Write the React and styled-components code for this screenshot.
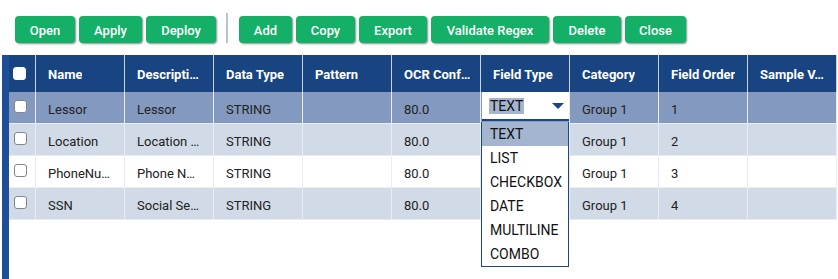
import React from 'react'
import styled, { createGlobalStyle } from 'styled-components'

const GlobalStyle = createGlobalStyle`
  body {
    margin: 0;
    background: #ffffff;
    font-family: Roboto, "Liberation Sans", Arial, sans-serif;
  }
`
const Page = styled.div`
  display: flex;
  flex-direction: column;
  height: 279px;
  overflow: hidden;
`
const Toolbar = styled.div`
  align-items: flex-end;
  display: flex;
  gap: 4px;
  height: 30px;
  padding: 13px 0 0 15px;
`
const Button = styled.button`
  background: #14b068;
  border: none;
  border-radius: 4px;
  box-shadow: 1px 1px 2px rgba(0, 0, 0, 0.45);
  color: #ffffff;
  font-family: Roboto, "Liberation Sans", sans-serif;
  font-size: 13px;
  font-weight: 500;
  height: 27px;
  padding: 1px 0 0;
  width: ${props => props.w}px;
`
const Separator = styled.div`
  align-self: stretch;
  background: #b3c2d8;
  margin: 0 7px 0 6px;
  width: 2px;
`
const Main = styled.div`
  display: flex;
  flex: 1;
  margin-top: 12px;
  padding-left: 2px;
`
const Strip = styled.div`
  background: #1f4e98;
  width: 7px;
`
const Grid = styled.div`
  align-self: flex-start;
  display: grid;
  grid-template-columns: 27px repeat(9, 89px);
`
const HeadCell = styled.div`
  align-items: center;
  background: #184481;
  border-right: 1px solid #c9d1dd;
  box-sizing: border-box;
  color: #ffffff;
  display: flex;
  font-size: 13px;
  font-weight: 700;
  height: 37px;
  overflow: hidden;
  padding: 2px 8px 0 12px;
  &:last-child {
    border-right: none;
  }
`
const Cell = styled.div`
  align-items: center;
  background: ${props => props.bg};
  border-bottom: 1px solid #e9edf2;
  border-right: 1px solid #e9edf2;
  box-sizing: border-box;
  color: #222222;
  display: flex;
  font-size: 13px;
  height: 32px;
  padding: 3px 8px 0 12px;
  position: relative;
`
const CheckCell = styled(Cell)`
  padding: 0 0 3px 5px;
`
const HeadCheckCell = styled(HeadCell)`
  padding: 0 0 1px 4px;
`
const Clip = styled.span`
  overflow: hidden;
  text-overflow: ellipsis;
  white-space: nowrap;
`
const Check = styled.span`
  background: #ffffff;
  border: 1px solid ${props => props.head ? '#ffffff' : '#858585'};
  border-radius: 3px;
  box-sizing: border-box;
  display: inline-block;
  height: 13px;
  width: 13px;
`
const SelectBox = styled.div`
  align-items: center;
  background: #ffffff;
  border-bottom: 2px solid #1b4585;
  bottom: 2px;
  box-sizing: border-box;
  display: flex;
  justify-content: space-between;
  left: 1px;
  padding: 0 5px 0 7px;
  position: absolute;
  right: 0;
  top: 0;
`
const SelectedText = styled.span`
  background: #a4b5cf;
  color: #111111;
  font-size: 14px;
  line-height: 16px;
  padding: 0 1px;
`
const OptionList = styled.div`
  background: #ffffff;
  border: 1px solid #1b4585;
  border-top: none;
  box-sizing: border-box;
  left: 0;
  position: absolute;
  right: 0;
  top: 30px;
  z-index: 2;
`
const Option = styled.div`
  align-items: center;
  background: ${props => props.active ? '#a4b5cf' : '#ffffff'};
  color: #111111;
  display: flex;
  font-size: 14px;
  height: 24px;
  padding-left: 8px;
`

// labels as the grid shows them, already cut to the column width
const columns = ['Name', 'Descripti…', 'Data Type', 'Pattern', 'OCR Conf…', 'Field Type', 'Category', 'Field Order', 'Sample V…']

const rows = [
  ['Lessor', 'Lessor', 'STRING', '', '80.0', 'TEXT', 'Group 1', '1', ''],
  ['Location', 'Location …', 'STRING', '', '80.0', '', 'Group 1', '2', ''],
  ['PhoneNu…', 'Phone N…', 'STRING', '', '80.0', '', 'Group 1', '3', ''],
  ['SSN', 'Social Se…', 'STRING', '', '80.0', '', 'Group 1', '4', '']
]

const rowColors = ['#8499bf', '#d1dbe7', '#ffffff', '#d1dbe7']

const fieldTypes = ['TEXT', 'LIST', 'CHECKBOX', 'DATE', 'MULTILINE', 'COMBO']

function FieldTypeSelect () {
  return (
    <>
      <SelectBox>
        <SelectedText>TEXT</SelectedText>
        <svg width='12' height='6' viewBox='0 0 12 6'>
          <polygon points='0,0 12,0 6,6' fill='#1b4585' />
        </svg>
      </SelectBox>
      <OptionList>
        {fieldTypes.map((t, i) => (
          <Option key={t} active={i === 0}>{t}</Option>
        ))}
      </OptionList>
    </>
  )
}

export default function App () {
  return (
    <Page>
      <GlobalStyle />
      <Toolbar>
        <Button w={60}>Open</Button>
        <Button w={63}>Apply</Button>
        <Button w={70}>Deploy</Button>
        <Separator />
        <Button w={53}>Add</Button>
        <Button w={59}>Copy</Button>
        <Button w={68}>Export</Button>
        <Button w={118}>Validate Regex</Button>
        <Button w={68}>Delete</Button>
        <Button w={61}>Close</Button>
      </Toolbar>
      <Main>
        <Strip />
        <Grid>
          <HeadCheckCell><Check head /></HeadCheckCell>
          {columns.map(c => (
            <HeadCell key={c}><Clip>{c}</Clip></HeadCell>
          ))}
          {rows.map((r, ri) => (
            <React.Fragment key={ri}>
              <CheckCell bg={rowColors[ri]}><Check /></CheckCell>
              {r.map((v, ci) => (
                <Cell key={ci} bg={rowColors[ri]}>
                  {ri === 0 && ci === 5 ? <FieldTypeSelect /> : <Clip>{v}</Clip>}
                </Cell>
              ))}
            </React.Fragment>
          ))}
        </Grid>
      </Main>
    </Page>
  )
}
